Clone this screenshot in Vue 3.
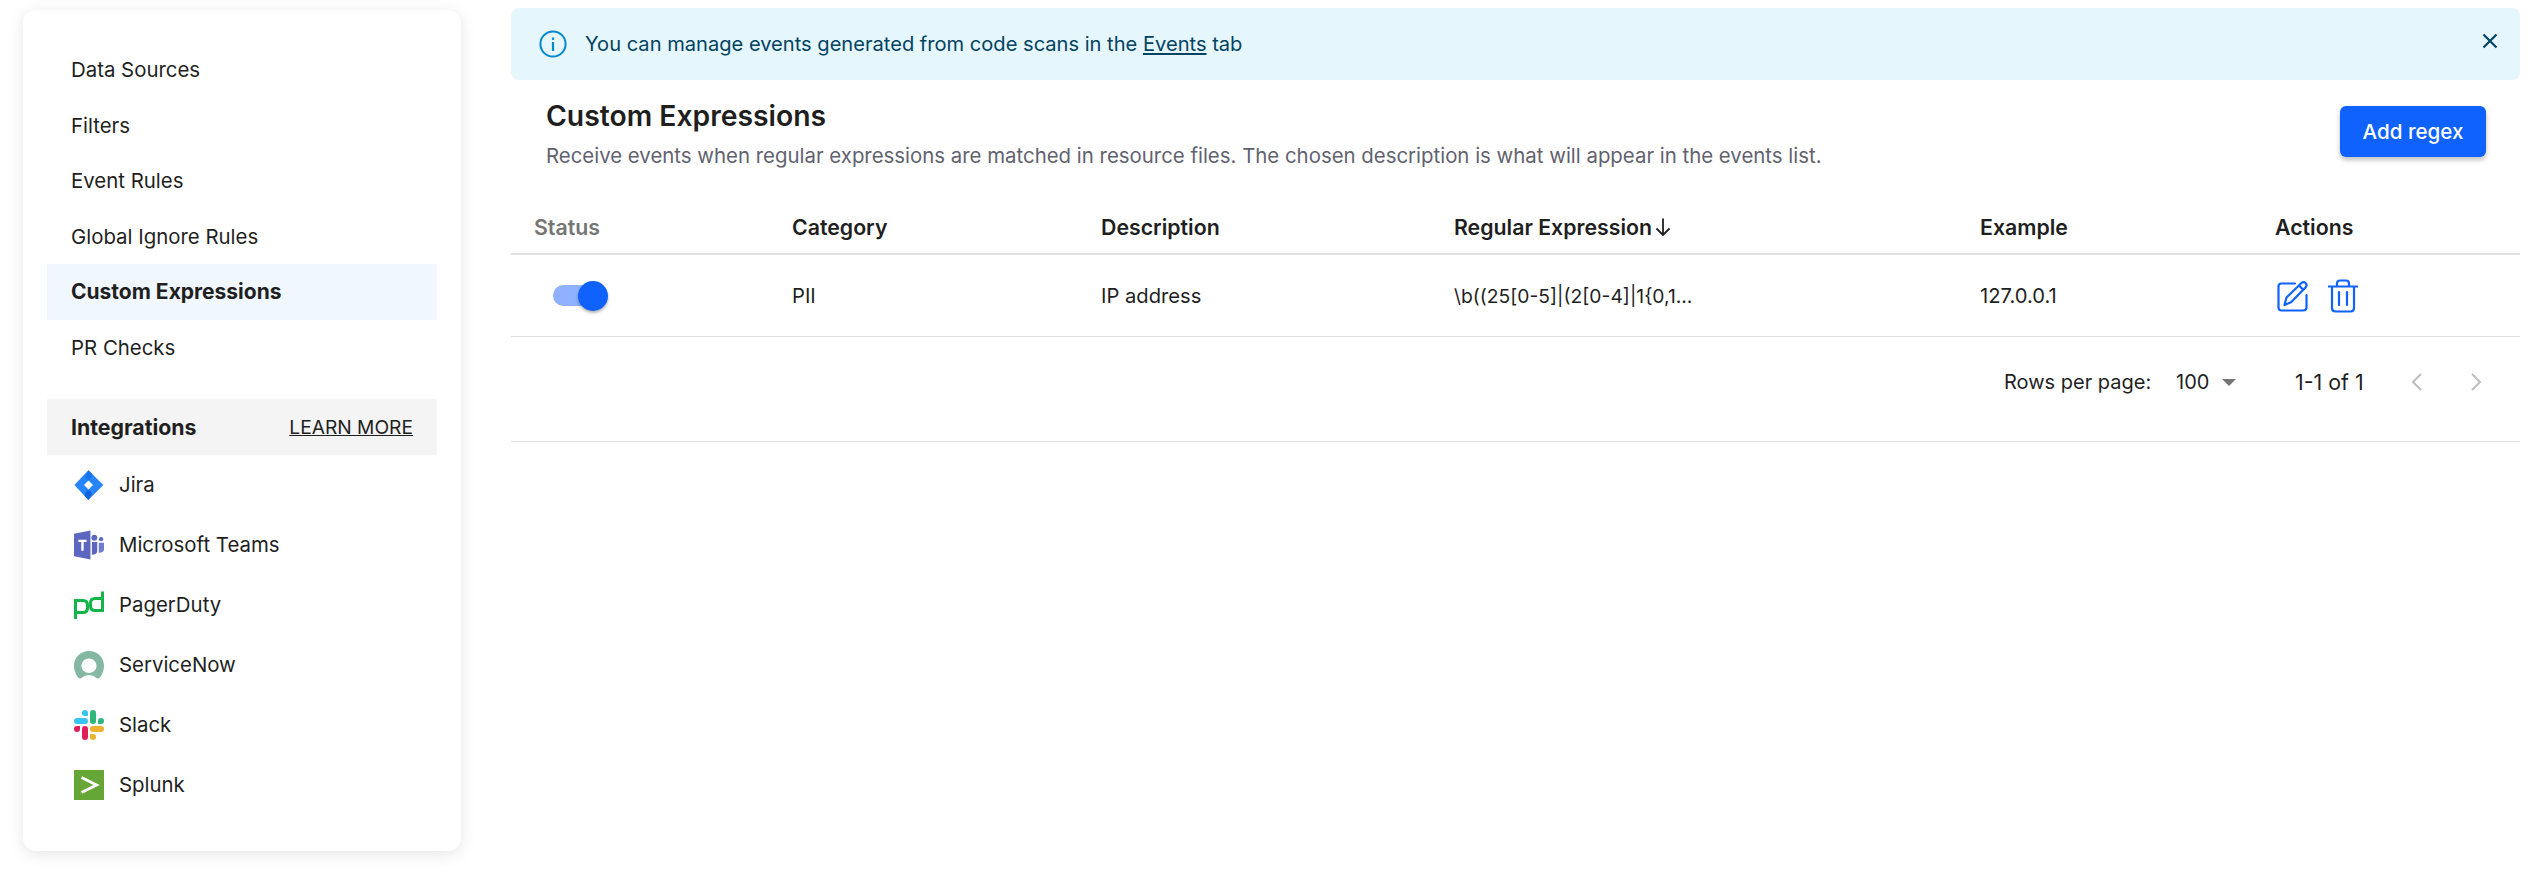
<template>
  <div class="page">
    <aside class="sidebar">
      <nav class="nav">
        <div v-for="item in navItems" :key="item" class="nav-item" :class="{ active: item === 'Custom Expressions' }">
          {{ item }}
        </div>
      </nav>
      <div class="integrations-head">
        <span class="integrations-title">Integrations</span>
        <span class="learn-more">LEARN MORE</span>
      </div>
      <div class="integration">
        <svg class="logo" viewBox="0 0 30 30">
          <path d="M14.4 0.2 L29.3 15 L14.4 30 L0.4 15 Z" fill="#2684ff" />
          <path d="M14.6 19.6 L18 23.5 L14.4 30 L10.8 26 Q11 22 14.6 19.6 Z" fill="#0f62d8" />
          <path d="M14.6 10.6 L10.8 7 L14.4 0.2 L18.2 4 Q18 8 14.6 10.6 Z" fill="#1a73ea" />
          <path d="M14.5 10.5 L19 15 L14.5 19.6 L10 15 Z" fill="#fff" />
        </svg>
        <span>Jira</span>
      </div>
      <div class="integration">
        <svg class="logo" viewBox="0 0 31 30">
          <path d="M0 3.4 L17 0 V30 L0 26.6 Z" fill="#5b67c0" />
          <path d="M4.5 9.5 H13 V12 H10 V21 H7.5 V12 H4.5 Z" fill="#fff" />
          <circle cx="21" cy="7.5" r="3" fill="#5b67c0" />
          <circle cx="28" cy="9" r="2.2" fill="#5b67c0" />
          <path d="M18.5 12 H24 V21 Q24 25 18.5 25 Z" fill="#5b67c0" />
          <path d="M25.6 12.6 H31 V19.5 Q31 23 25.6 23 Z" fill="#6f7bd0" />
        </svg>
        <span>Microsoft Teams</span>
      </div>
      <div class="integration">
        <svg class="logo" viewBox="0 0 30 30">
          <path d="M1.5 29 V10.5 H9 Q13.5 10.5 13.5 15 V18 Q13.5 22.5 9 22.5 H1.5" fill="none" stroke="#12b54a" stroke-width="3" />
          <path d="M28.5 1.5 V20.5 H21 Q16.5 20.5 16.5 16 V13 Q16.5 8.5 21 8.5 H28.5" fill="none" stroke="#12b54a" stroke-width="3" />
        </svg>
        <span>PagerDuty</span>
      </div>
      <div class="integration">
        <svg class="logo" viewBox="0 0 30 30">
          <path d="M15 1 C6.5 1 0 7.5 0 16 C0 20 1.5 24 4 27.5 C5.2 28.8 6.8 28.8 8 27.8 C10 26 12.3 25 15 25 C17.7 25 20 26 22 27.8 C23.2 28.8 24.8 28.8 26 27.5 C28.5 24 30 20 30 16 C30 7.5 23.5 1 15 1 Z M15 23 C11 23 7.5 20 7.5 15.8 C7.5 11.8 11 8.6 15 8.6 C19 8.6 22.5 11.8 22.5 15.8 C22.5 20 19 23 15 23 Z" fill="#84b8a2" />
        </svg>
        <span>ServiceNow</span>
      </div>
      <div class="integration">
        <svg class="logo" viewBox="0 0 54 54">
          <path d="M19.7 0a5.4 5.4 0 0 0 0 10.8h5.4V5.4A5.4 5.4 0 0 0 19.7 0M19.7 14.4H5.4a5.4 5.4 0 0 0 0 10.8h14.3a5.4 5.4 0 0 0 0-10.8" fill="#36c5f0" />
          <path d="M54 19.8a5.4 5.4 0 0 0-10.8 0v5.4h5.4a5.4 5.4 0 0 0 5.4-5.4M39.6 19.8V5.4a5.4 5.4 0 0 0-10.8 0v14.4a5.4 5.4 0 0 0 10.8 0" fill="#2eb67d" />
          <path d="M34.2 54a5.4 5.4 0 0 0 0-10.8h-5.4v5.4a5.4 5.4 0 0 0 5.4 5.4M34.2 39.6h14.4a5.4 5.4 0 0 0 0-10.8H34.2a5.4 5.4 0 0 0 0 10.8" fill="#ecb22e" />
          <path d="M0 34.2a5.4 5.4 0 0 0 10.8 0v-5.4H5.4A5.4 5.4 0 0 0 0 34.2M14.4 34.2v14.4a5.4 5.4 0 0 0 10.8 0V34.2a5.4 5.4 0 0 0-10.8 0" fill="#e01e5a" />
        </svg>
        <span>Slack</span>
      </div>
      <div class="integration">
        <svg class="logo" viewBox="0 0 30 30">
          <rect width="30" height="30" fill="#65a637" />
          <path d="M7.5 7.5 L22.5 15 L7.5 22.5" fill="none" stroke="#fff" stroke-width="3" />
        </svg>
        <span>Splunk</span>
      </div>
    </aside>

    <main class="main">
      <div class="banner">
        <svg class="banner-icon" viewBox="0 0 28 28">
          <circle cx="14" cy="14" r="12.6" fill="none" stroke="#0288d1" stroke-width="2" />
          <rect x="12.9" y="12" width="2.2" height="9" fill="#0288d1" />
          <rect x="12.9" y="7.5" width="2.2" height="2.4" fill="#0288d1" />
        </svg>
        <span class="banner-text">You can manage events generated from code scans in the <u>Events</u> tab</span>
        <svg class="banner-close" viewBox="0 0 16 16">
          <path d="M1.5 1.5 L14.5 14.5 M14.5 1.5 L1.5 14.5" stroke="#014361" stroke-width="2.2" fill="none" />
        </svg>
      </div>

      <div class="header">
        <div class="header-text">
          <h1>Custom Expressions</h1>
          <p>Receive events when regular expressions are matched in resource files. The chosen description is what will appear in the events list.</p>
        </div>
        <button class="add-button">Add regex</button>
      </div>

      <div class="table-row head-row">
        <div class="muted">Status</div>
        <div>Category</div>
        <div>Description</div>
        <div class="sorted">
          Regular Expression
          <svg class="sort-arrow" viewBox="0 0 16 20">
            <path d="M8 1.5 V18 M1.5 11.5 L8 18 L14.5 11.5" fill="none" stroke="#1f1f1f" stroke-width="1.8" />
          </svg>
        </div>
        <div>Example</div>
        <div>Actions</div>
      </div>

      <div class="table-row body-row">
        <div>
          <span class="toggle"><span class="toggle-knob"></span></span>
        </div>
        <div>PII</div>
        <div>IP address</div>
        <div class="regex">\b((25[0-5]|(2[0-4]|1{0,1...</div>
        <div>127.0.0.1</div>
        <div class="actions">
          <svg class="edit-icon" viewBox="0 0 32 32">
            <path d="M18 3.5 H4.5 Q1.5 3.5 1.5 6.5 V27.5 Q1.5 30.5 4.5 30.5 H26 Q29.5 30.5 29.5 27.5 V15" fill="none" stroke="#0f62fe" stroke-width="2.2" stroke-linecap="round" />
            <path d="M7.5 25 L9.5 17.5 L24.5 3 Q26.5 1.2 28.5 3 Q30.5 5.2 28.7 7.2 L14 22.2 Z M22 5.5 L26.5 10" fill="none" stroke="#0f62fe" stroke-width="2.2" stroke-linejoin="round" />
          </svg>
          <svg class="trash-icon" viewBox="0 0 30 34">
            <path d="M0.5 7.5 H29.5 M9 7.5 V4.5 Q9 1.5 12 1.5 H18 Q21 1.5 21 4.5 V7.5 M4 7.5 V29 Q4 32.5 7.5 32.5 H22.5 Q26 32.5 26 29 V7.5 M11 13 V26 M19 13 V26" fill="none" stroke="#0f62fe" stroke-width="2.2" stroke-linecap="round" />
          </svg>
        </div>
      </div>

      <div class="pagination">
        <span class="rows-label">Rows per page:</span>
        <span class="rows-value">100</span>
        <span class="caret"></span>
        <span class="range">1-1 of 1</span>
        <svg class="chevron" viewBox="0 0 12 20">
          <path d="M10 2 L2 10 L10 18" fill="none" stroke="#bdbdbd" stroke-width="2" />
        </svg>
        <svg class="chevron next" viewBox="0 0 12 20">
          <path d="M2 2 L10 10 L2 18" fill="none" stroke="#bdbdbd" stroke-width="2" />
        </svg>
      </div>
    </main>
  </div>
</template>

<script setup>
const navItems = [
  'Data Sources',
  'Filters',
  'Event Rules',
  'Global Ignore Rules',
  'Custom Expressions',
  'PR Checks'
];
</script>

<style>
html,
body {
  margin: 0;
  background: #fff;
}
</style>

<style scoped>
.page {
  display: flex;
  align-items: flex-start;
  width: 2538px;
  height: 892px;
  overflow: hidden;
  font-family: Inter, "Liberation Sans", sans-serif;
  font-size: 20.4px;
  color: #1f1f1f;
  box-sizing: border-box;
}

.sidebar {
  width: 438px;
  height: 841px;
  margin: 10px 50px 0 23px;
  padding: 32px 24px 0;
  box-sizing: border-box;
  flex-shrink: 0;
  background: #fff;
  border-radius: 13px;
  box-shadow: 0 3px 16px rgba(0, 0, 0, 0.1);
}

.nav {
  margin-bottom: 23.5px;
}

.nav-item {
  height: 55.5px;
  line-height: 55.5px;
  padding-left: 24px;
}

.nav-item.active {
  background: #f0f7ff;
  font-size: 21px;
  font-weight: 700;
}

.integrations-head {
  display: flex;
  justify-content: space-between;
  align-items: center;
  height: 56px;
  padding: 0 24px;
  background: #f4f4f4;
}

.integrations-title {
  font-size: 21.3px;
  font-weight: 700;
}

.learn-more {
  font-size: 19.2px;
  text-decoration: underline;
}

.integration {
  display: flex;
  align-items: center;
  gap: 15px;
  height: 60px;
  padding-left: 27px;
}

.logo {
  width: 30px;
  height: 30px;
  flex-shrink: 0;
}

.main {
  width: 2009px;
  padding-top: 8px;
}

.banner {
  display: flex;
  align-items: center;
  height: 72px;
  padding: 0 22px 0 28px;
  box-sizing: border-box;
  background: #e5f6fd;
  border-radius: 8px;
  color: #014361;
  font-size: 20.1px;
}

.banner-icon {
  width: 28px;
  height: 28px;
  margin-right: 18px;
}

.banner-text {
  flex: 1;
}

.banner-close {
  width: 16px;
  height: 16px;
  margin-bottom: 6px;
}

.header {
  display: flex;
  justify-content: space-between;
  align-items: flex-start;
  height: 120px;
  padding: 18px 34px 0 35px;
  box-sizing: border-box;
}

h1 {
  margin: 0;
  font-size: 28.3px;
  line-height: 36px;
  font-weight: 600;
}

p {
  margin: 7px 0 0;
  line-height: 30px;
  color: #62626f;
}

.add-button {
  width: 146px;
  height: 51px;
  margin-top: 8px;
  border: none;
  border-radius: 6px;
  background: #0f62fe;
  color: #fff;
  font: 500 20.6px Inter, "Liberation Sans", sans-serif;
  box-shadow: 0 3px 5px rgba(0, 0, 0, 0.25);
}

.table-row {
  display: grid;
  grid-template-columns: 258px 309px 353px 526px 295px 245px;
  align-items: center;
  box-sizing: border-box;
  border-bottom: 1px solid #e0e0e0;
  padding-left: 23px;
}

.head-row {
  height: 55px;
  font-size: 21.3px;
  font-weight: 600;
  border-bottom-width: 2px;
}

.muted {
  color: #757575;
}

.sorted {
  display: flex;
  align-items: center;
  gap: 3px;
}

.sort-arrow {
  width: 16px;
  height: 20px;
}

.body-row {
  height: 82px;
  font-size: 20.2px;
}

.regex {
  font-size: 19.3px;
}

.toggle {
  display: block;
  position: relative;
  width: 47px;
  height: 21px;
  margin-left: 19px;
  border-radius: 11px;
  background: #8fb1ff;
}

.toggle-knob {
  position: absolute;
  top: -4.5px;
  right: -8px;
  width: 30px;
  height: 30px;
  border-radius: 50%;
  background: #0f62fe;
  box-shadow: 0 2px 3px rgba(0, 0, 0, 0.3);
}

.actions {
  display: flex;
  align-items: center;
  gap: 19px;
  padding-left: 2px;
}

.edit-icon {
  width: 32px;
  height: 32px;
}

.trash-icon {
  width: 30px;
  height: 34px;
}

.pagination {
  display: flex;
  align-items: center;
  height: 105px;
  padding-bottom: 14px;
  padding-left: 1493px;
  box-sizing: border-box;
  border-bottom: 1px solid #e0e0e0;
  font-size: 20px;
}

.rows-label {
  width: 172px;
}

.rows-value {
  width: 46px;
}

.caret {
  width: 0;
  height: 0;
  border-left: 7px solid transparent;
  border-right: 7px solid transparent;
  border-top: 7px solid #757575;
  margin-right: 59px;
}

.range {
  width: 116px;
  font-size: 21.4px;
}

.chevron {
  width: 12px;
  height: 20px;
}

.chevron.next {
  margin-left: 47px;
}
</style>
